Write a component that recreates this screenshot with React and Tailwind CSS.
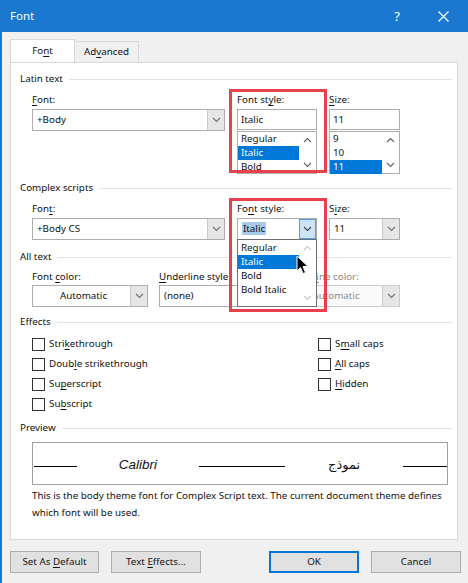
import clsx from "clsx";

// Word "Font" dialog, Font tab, with the Font style dropdown open

const Chevron = ({ up, className }) => (
  <svg width="9" height="6" viewBox="0 0 9 6" className={className}>
    <path
      d={up ? "M1 5 L4.5 1.5 L8 5" : "M1 1 L4.5 4.5 L8 1"}
      fill="none"
      stroke="currentColor"
      strokeWidth="1.1"
    />
  </svg>
);

// access-key underline
const K = ({ children }) => <span className="underline underline-offset-2">{children}</span>;

function Group({ label, className }) {
  return (
    <div className={clsx("flex h-[16px] items-center pl-[9px] pr-[5px]", className)}>
      <span className="pr-[6px]">{label}</span>
      <div className="h-px flex-1 bg-[#e3e3e3]" />
    </div>
  );
}

function Combo({ children, className, textClass, btnClass, disabled }) {
  return (
    <div
      className={clsx(
        "flex h-[22px] border",
        disabled ? "border-[#cccccc] bg-[#fafafa]" : "border-[#adadad] bg-white",
        className
      )}
    >
      <div className={clsx("flex flex-1 items-center pl-[4px]", disabled && "text-[#8a8a8a]", textClass)}>
        <span>{children}</span>
      </div>
      <div
        className={clsx(
          "flex w-[17px] items-center justify-center border-l",
          btnClass || "border-[#c9c9c9] bg-[#e6e6e6] text-[#707070]"
        )}
      >
        <Chevron />
      </div>
    </div>
  );
}

function ListBox({ items, selected, className }) {
  return (
    <div className={clsx("flex h-[43px] border border-[#adadad] bg-white", className)}>
      <div className="flex flex-1 flex-col">
        {items.map((it) => (
          <div
            key={it}
            className={clsx("flex h-[14px] items-center pl-[3px]", it === selected && "bg-[#0078d7] text-white")}
          >
            {it}
          </div>
        ))}
      </div>
      <div className="flex w-[17px] flex-col items-center justify-between py-[5px] text-[#606060]">
        <Chevron up />
        <Chevron />
      </div>
    </div>
  );
}

function Check({ children, className }) {
  return (
    <div className={clsx("flex h-[20px] items-center", className)}>
      <div className="mr-[4px] h-[13px] w-[13px] border border-[#333333] bg-white" />
      <span>{children}</span>
    </div>
  );
}

function Button({ children, className }) {
  return (
    <div className={clsx("flex h-[22px] items-center justify-center border bg-[#e1e1e1]", className)}>
      <span>{children}</span>
    </div>
  );
}

function Cursor() {
  return (
    <svg width="13" height="20" viewBox="0 0 13 20">
      <path
        d="M1 1 L1 16 L4.5 12.5 L7 18.5 L9.5 17.5 L7 11.5 L12 11.5 Z"
        fill="#000"
        stroke="#fff"
        strokeWidth="1"
        strokeLinejoin="round"
      />
    </svg>
  );
}

export default function App() {
  return (
    <div className="flex h-[583px] w-[468px] flex-col overflow-hidden border-l-2 border-[#1a78d0] bg-[#f0f0f0] font-['Noto_Sans','DejaVu_Sans',sans-serif] text-[9.8px] leading-[16px] text-[#111]">
      {/* title bar */}
      <div className="flex h-[32px] items-center bg-[#1a78d0] pl-[8px] text-white">
        <span className="text-[11.5px]">Font</span>
        <span className="ml-auto mr-[38px] text-[13px]">?</span>
        <svg width="11" height="11" viewBox="0 0 11 11" className="mr-[19px]">
          <path d="M0.5 0.5 L10.5 10.5 M10.5 0.5 L0.5 10.5" stroke="#fff" strokeWidth="1.2" />
        </svg>
      </div>

      {/* tabs */}
      <div className="mt-[8px] flex h-[22px] items-end pl-[8px]">
        <div className="relative z-10 flex h-[23px] w-[65px] items-center justify-center border border-b-0 border-[#d9d9d9] bg-white">
          <span>
            Fo<K>n</K>t
          </span>
        </div>
        <div className="flex h-[21px] w-[64px] items-center justify-center border border-b-0 border-l-0 border-[#d9d9d9] bg-[#f0f0f0]">
          <span>
            Ad<K>v</K>anced
          </span>
        </div>
      </div>

      {/* tab panel */}
      <div className="relative ml-[8px] h-[478px] w-[448px] border border-[#d9d9d9] bg-white">
        <Group label="Latin text" className="mt-[8px]" />
        <div className="mt-[5px] flex gap-[12px] pl-[21px]">
          <div className="w-[193px]">
            <div className="h-[16px]">
              <K>F</K>ont:
            </div>
            <Combo className="mt-[1px] w-[193px]">+Body</Combo>
          </div>
          <div className="w-[80px]">
            <div className="h-[16px]">
              Font st<K>y</K>le:
            </div>
            <div className="mt-[1px] flex h-[21px] items-center border border-[#adadad] bg-white pl-[3px]">Italic</div>
            <ListBox items={["Regular", "Italic", "Bold"]} selected="Italic" className="mt-[1px]" />
          </div>
          <div className="w-[71px]">
            <div className="h-[16px]">
              <K>S</K>ize:
            </div>
            <div className="mt-[1px] flex h-[21px] items-center border border-[#adadad] bg-white pl-[3px]">11</div>
            <ListBox items={["9", "10", "11"]} selected="11" className="mt-[1px]" />
          </div>
        </div>

        <Group label="Complex scripts" className="mt-[6px]" />
        <div className="mt-[5px] flex gap-[12px] pl-[21px]">
          <div className="w-[193px]">
            <div className="h-[16px]">
              Fon<K>t</K>:
            </div>
            <Combo className="mt-[1px] w-[193px]">+Body CS</Combo>
          </div>
          <div className="w-[80px]">
            <div className="h-[16px]">
              Fo<K>n</K>t style:
            </div>
            <Combo
              className="mt-[1px] w-[80px]"
              textClass="pl-[2px]"
              btnClass="border-[#569de5] bg-[#cce4f7] text-[#404040] border"
            >
              <span className="bg-[#a8c8ec] px-[1px]">Italic</span>
            </Combo>
          </div>
          <div className="w-[71px]">
            <div className="h-[16px]">
              S<K>i</K>ze:
            </div>
            <Combo className="mt-[1px] w-[71px]">11</Combo>
          </div>
        </div>

        <Group label="All text" className="mt-[9px]" />
        <div className="mt-[4px] flex gap-[11px] pl-[21px]">
          <div className="w-[116px]">
            <div className="h-[16px]">
              Font <K>c</K>olor:
            </div>
            <Combo className="w-[116px]" textClass="justify-center">
              Automatic
            </Combo>
          </div>
          <div className="w-[115px]">
            <div className="h-[16px] whitespace-nowrap">
              <K>U</K>nderline style:
            </div>
            <Combo className="w-[115px]">(none)</Combo>
          </div>
          <div className="w-[115px]">
            <div className="h-[16px] text-[#8a8a8a]">
              Underl<K>i</K>ne color:
            </div>
            <Combo className="w-[115px]" textClass="justify-center" disabled>
              Automatic
            </Combo>
          </div>
        </div>

        <Group label="Effects" className="mt-[7px]" />
        <div className="mt-[4px] flex pl-[21px]">
          <div className="w-[286px]">
            <Check>
              Stri<K>k</K>ethrough
            </Check>
            <Check>
              Doub<K>l</K>e strikethrough
            </Check>
            <Check>
              Su<K>p</K>erscript
            </Check>
            <Check>
              Su<K>b</K>script
            </Check>
          </div>
          <div>
            <Check>
              S<K>m</K>all caps
            </Check>
            <Check>
              <K>A</K>ll caps
            </Check>
            <Check>
              <K>H</K>idden
            </Check>
          </div>
        </div>

        <Group label="Preview" className="mt-[6px]" />
        <div className="ml-[21px] mt-[6px] flex h-[43px] w-[416px] items-center border border-[#a0a0a0] pt-[2px]">
          <div className="mb-[17px] ml-[1px] h-px w-[43px] self-end bg-black" />
          <div className="flex-1 text-center font-['Liberation_Sans',sans-serif] text-[13.5px] italic">Calibri</div>
          <div className="mb-[17px] h-px w-[86px] self-end bg-black" />
          <div className="w-[118px] text-center font-['DejaVu_Sans',serif] text-[13px]" dir="rtl">
            نموذج
          </div>
          <div className="mb-[17px] h-px w-[44px] self-end bg-black" />
        </div>
        <div className="ml-[21px] mt-[2px] whitespace-nowrap leading-[17px]">
          This is the body theme font for Complex Script text. The current document theme defines
          <br />
          which font will be used.
        </div>

        {/* open dropdown list */}
        <div className="absolute left-[226px] top-[176px] flex h-[68px] w-[80px] border border-[#6e6e6e] bg-white">
          <div className="flex flex-1 flex-col pt-[1px]">
            <div className="flex h-[14px] items-center pl-[3px]">Regular</div>
            <div className="flex h-[14px] items-center bg-[#0078d7] pl-[3px] text-white">Italic</div>
            <div className="flex h-[14px] items-center pl-[3px]">Bold</div>
            <div className="flex h-[14px] items-center pl-[3px]">Bold Italic</div>
          </div>
          <div className="flex w-[17px] flex-col items-center justify-between py-[5px] text-[#c8c8c8]">
            <Chevron up />
            <Chevron />
          </div>
        </div>

        {/* annotation boxes */}
        <div className="pointer-events-none absolute left-[218px] top-[26px] h-[84px] w-[98px] border-[3px] border-[#e8414b]" />
        <div className="pointer-events-none absolute left-[218px] top-[135px] h-[114px] w-[98px] border-[3px] border-[#e8414b]" />

        <div className="pointer-events-none absolute left-[285px] top-[192px]">
          <Cursor />
        </div>
      </div>

      {/* buttons */}
      <div className="mt-[11px] flex pl-[8px]">
        <Button className="w-[89px] border-[#adadad]">
          Set As <K>D</K>efault
        </Button>
        <Button className="ml-[12px] w-[90px] border-[#adadad]">
          Text <K>E</K>ffects...
        </Button>
        <Button className="ml-[68px] w-[90px] border-2 border-[#0078d7]">OK</Button>
        <Button className="ml-[12px] w-[90px] border-[#adadad]">Cancel</Button>
      </div>
    </div>
  );
}
